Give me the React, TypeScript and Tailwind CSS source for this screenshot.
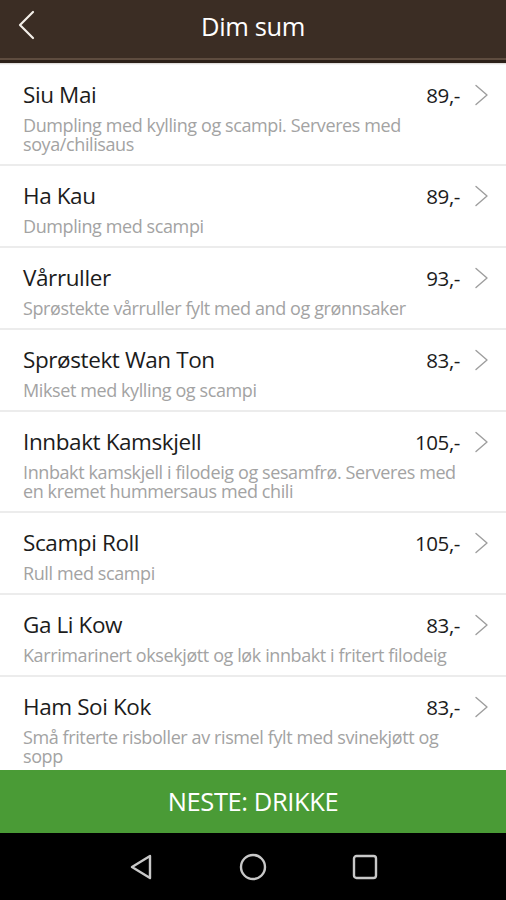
const dishes = [
  { name: 'Siu Mai', price: '89,-', desc: 'Dumpling med kylling og scampi. Serveres med soya/chilisaus' },
  { name: 'Ha Kau', price: '89,-', desc: 'Dumpling med scampi' },
  { name: 'Vårruller', price: '93,-', desc: 'Sprøstekte vårruller fylt med and og grønnsaker' },
  { name: 'Sprøstekt Wan Ton', price: '83,-', desc: 'Mikset med kylling og scampi' },
  {
    name: 'Innbakt Kamskjell',
    price: '105,-',
    desc: 'Innbakt kamskjell i filodeig og sesamfrø. Serveres med en kremet hummersaus med chili',
  },
  { name: 'Scampi Roll', price: '105,-', desc: 'Rull med scampi' },
  { name: 'Ga Li Kow', price: '83,-', desc: 'Karrimarinert oksekjøtt og løk innbakt i fritert filodeig' },
  { name: 'Ham Soi Kok', price: '83,-', desc: 'Små friterte risboller av rismel fylt med svinekjøtt og sopp' },
];

const font = { fontFamily: '"Open Sans", "Noto Sans", sans-serif' };

const App = () => {
  return (
    <div className="w-[506px] h-[900px] flex flex-col bg-white overflow-hidden" style={font}>
      {/* header */}
      <header className="shrink-0">
        <div className="h-[58px] bg-[#3b2d24] relative flex items-center justify-center">
          <button aria-label="Tilbake" className="absolute left-[17px] top-[10px] w-[20px] h-[30px] flex items-center">
            <svg width="18" height="30" viewBox="0 0 18 30" fill="none">
              <path d="M16 2 L3 15 L16 28" stroke="#f3efe9" strokeWidth="2.2" strokeLinecap="round" strokeLinejoin="round" />
            </svg>
          </button>
          <h1 className="text-[25.5px] leading-none text-white tracking-[-0.4px] -mt-[4px]">Dim sum</h1>
        </div>
        <div className="h-[2px] bg-[#5e4c3f]" />
        <div className="h-[3px] bg-[#2c2119]" />
        <div className="h-[2px] bg-gradient-to-b from-[#d6d3d0] to-white" />
      </header>

      {/* list */}
      <div className="flex-1 overflow-hidden">
        {dishes.map((d) => (
          <div key={d.name} className="border-b-2 border-[#ececec] pl-[23px] pr-[17px] pt-[16px] pb-[10px]">
            <div className="flex items-center h-[28px]">
              <span className="flex-1 text-[22.5px] text-[#1c1c1c] tracking-[-0.4px]">{d.name}</span>
              <span className="text-[20.5px] text-[#1c1c1c] tracking-[-0.4px]">{d.price}</span>
              <svg className="ml-[14px]" width="15" height="22" viewBox="0 0 15 22" fill="none">
                <path d="M2 1.5 L13 11 L2 20.5" stroke="#9e9e9e" strokeWidth="1.4" strokeLinecap="round" strokeLinejoin="round" />
              </svg>
            </div>
            <p className="mt-[7px] pr-[19px] text-[18px] leading-[19px] text-[#a3a3a3] tracking-[-0.4px]">{d.desc}</p>
          </div>
        ))}
      </div>

      {/* next button */}
      <button className="shrink-0 h-[63px] bg-[#4a9b36] text-white text-[25.5px] tracking-[-0.4px] flex items-center justify-center">
        NESTE: DRIKKE
      </button>

      {/* android nav bar */}
      <nav className="shrink-0 h-[67px] bg-black flex items-center justify-center gap-[85px]">
        <svg width="26" height="28" viewBox="0 0 26 28" fill="none">
          <path d="M22 3 L4 14 L22 25 Z" stroke="#c8c8c8" strokeWidth="2.4" strokeLinejoin="round" />
        </svg>
        <svg width="28" height="28" viewBox="0 0 28 28" fill="none">
          <circle cx="14" cy="14" r="12" stroke="#c8c8c8" strokeWidth="2.4" />
        </svg>
        <svg width="26" height="26" viewBox="0 0 26 26" fill="none">
          <rect x="2" y="2" width="22" height="22" rx="2.5" stroke="#c8c8c8" strokeWidth="2.4" />
        </svg>
      </nav>
    </div>
  );
};

export default App;
